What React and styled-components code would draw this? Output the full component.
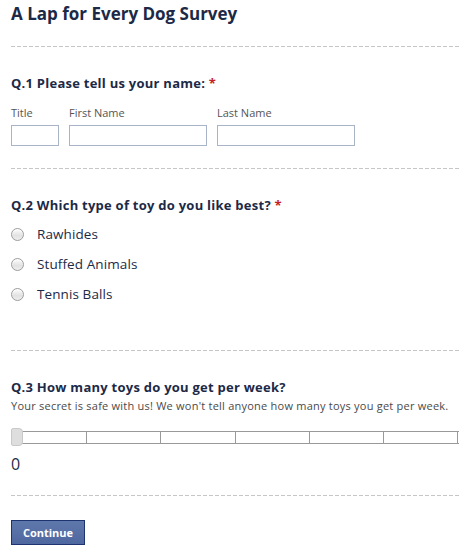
import React from "react"
import styled, {createGlobalStyle} from "styled-components"

const GlobalStyle = createGlobalStyle`
  html, body {
    margin: 0;
    padding: 0;
    overflow: hidden;
    background: #fff;
  }
  body {
    font-family: "Open Sans", "DejaVu Sans", sans-serif;
    color: #1c2a47;
  }
`

const Page = styled.div`
  padding: 4px 0 0 11px;
`

const Title = styled.h1`
  margin: 0;
  font-size: 17px;
  line-height: 20px;
  font-weight: bold;
  color: #1c2a47;
`

const Divider = styled.div`
  height: 1px;
  margin-top: ${(p) => p.$gap || 22}px;
  background: repeating-linear-gradient(to right, #c6c6c6 0 4px, transparent 4px 6px);
`

const Section = styled.section`
  padding-top: 28px;
`

const Question = styled.h2`
  margin: 0;
  font-size: 13px;
  line-height: 16px;
  letter-spacing: 0.25px;
  font-weight: bold;
  color: #1c2a47;
`

const Required = styled.span`
  color: #c4202a;
`

const Hint = styled.p`
  margin: 4px 0 0;
  font-size: 11px;
  line-height: 14px;
  letter-spacing: 0.23px;
  white-space: nowrap;
  color: #4a4a4a;
`

const NameRow = styled.div`
  display: flex;
  gap: 10px;
  margin-top: 15px;
`

const Field = styled.label`
  display: flex;
  flex-direction: column;
  gap: 5px;
  width: ${(p) => p.$width}px;
`

const FieldLabel = styled.span`
  font-size: 11px;
  line-height: 14px;
  color: #555;
`

const TextInput = styled.input`
  box-sizing: border-box;
  width: 100%;
  height: 21px;
  margin: 0;
  padding: 2px 4px;
  border: 1px solid #aab4c9;
  border-radius: 0;
  font: inherit;
  font-size: 11px;
  outline: none;
`

const Options = styled.div`
  margin-top: 6px;
`

const Option = styled.label`
  display: flex;
  align-items: center;
  gap: 13px;
  height: 30px;
  font-size: 13.5px;
  letter-spacing: 0.1px;
  color: #1c2a47;
`

const RadioDot = styled.span`
  box-sizing: border-box;
  width: 13px;
  height: 13px;
  border-radius: 50%;
  border: 1px solid #9c9c9c;
  background: linear-gradient(#fdfdfd, #e2e2e2 60%, #eeeeee);
  box-shadow: inset 0 1px 1px rgba(255, 255, 255, 0.9);
`

const SliderWrap = styled.div`
  position: relative;
  height: 18px;
  margin-top: 15px;
  display: flex;
  align-items: center;
  overflow: hidden;
`

const Track = styled.div`
  display: flex;
  box-sizing: border-box;
  height: 13px;
  width: 460px;
  flex: none;
  border: 1px solid #999;
  background: #fff;
`

const Segment = styled.div`
  box-sizing: border-box;
  flex: 0 0 ${(p) => (p.$first ? 75 : 74.3)}px;
  border-right: 1px solid #999;
`

const Thumb = styled.div`
  position: absolute;
  left: 0;
  top: 0;
  box-sizing: border-box;
  width: 12px;
  height: 18px;
  border: 1px solid #c9c9c9;
  border-radius: 2px 4px 4px 2px;
  background: #dedede;
`

const Value = styled.div`
  margin-top: 9px;
  font-size: 16px;
  line-height: 18px;
  color: #1c2a47;
`

const Button = styled.button`
  box-sizing: border-box;
  width: 74px;
  height: 25px;
  margin-top: 24px;
  padding: 0;
  border: 1px solid #1d3470;
  background: linear-gradient(#5f78ab, #4f67a0);
  color: #fff;
  font-family: "Open Sans", sans-serif;
  font-size: 11px;
  font-weight: bold;
  cursor: pointer;
`

const toys = ["Rawhides", "Stuffed Animals", "Tennis Balls"]

const App = () => (
  <Page>
    <GlobalStyle />
    <Title>A Lap for Every Dog Survey</Title>
    <Divider />

    <Section>
      <Question>
        Q.1 Please tell us your name: <Required>*</Required>
      </Question>
      <NameRow>
        <Field $width={48}>
          <FieldLabel>Title</FieldLabel>
          <TextInput />
        </Field>
        <Field $width={138}>
          <FieldLabel>First Name</FieldLabel>
          <TextInput />
        </Field>
        <Field $width={138}>
          <FieldLabel>Last Name</FieldLabel>
          <TextInput />
        </Field>
      </NameRow>
    </Section>
    <Divider />

    <Section>
      <Question>
        Q.2 Which type of toy do you like best? <Required>*</Required>
      </Question>
      <Options>
        {toys.map((toy) => (
          <Option key={toy}>
            <RadioDot />
            {toy}
          </Option>
        ))}
      </Options>
    </Section>
    <Divider $gap={41} />

    <Section>
      <Question>Q.3 How many toys do you get per week?</Question>
      <Hint>Your secret is safe with us! We won't tell anyone how many toys you get per week.</Hint>
      <SliderWrap>
        <Track>
          {[0, 1, 2, 3, 4, 5, 6].map((i) => (
            <Segment key={i} $first={i === 0} />
          ))}
        </Track>
        <Thumb />
      </SliderWrap>
      <Value>0</Value>
    </Section>
    <Divider $gap={22} />

    <Button>Continue</Button>
  </Page>
)

export default App
